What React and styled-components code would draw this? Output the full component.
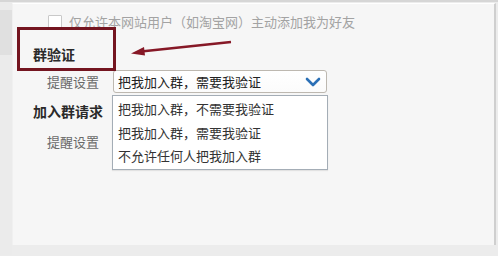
import React from "react";
import styled, { createGlobalStyle } from "styled-components";

const GlobalStyle = createGlobalStyle`
  html, body {
    margin: 0;
    padding: 0;
    background: #ececec;
  }
  body {
    font-family: "Noto Sans CJK SC", "Noto Sans", sans-serif;
  }
`;

const Screen = styled.div`
  position: relative;
  width: 498px;
  height: 256px;
  overflow: hidden;
  display: flex;
  background: #ececec;
  border-top: 2px solid #d6d6d6;
  box-sizing: border-box;
`;

const SideStrip = styled.div`
  width: 12px;
  flex-shrink: 0;
  display: flex;
  flex-direction: column;
`;

const SideBlock = styled.div`
  height: ${(p) => p.h}px;
  background: ${(p) => (p.dark ? "#e0e0e0" : "#ebebeb")};
`;

const Panel = styled.div`
  position: relative;
  margin-top: 1px;
  width: 484px;
  height: 242px;
  box-sizing: border-box;
  background: #f6f6f6;
  border-top: 1px solid #ffffff;
  border-left: 1px solid #f0f0f0;
  border-right: 2px solid #cfcfcf;
  padding: 4px 0 0 20px;
`;

const CheckRow = styled.label`
  display: flex;
  align-items: center;
  height: 26px;
  padding-left: 15px;
  gap: 7px;
  font-size: 13px;
  color: #a3a3a3;
`;

const CheckBox = styled.span`
  width: 12px;
  height: 12px;
  margin-top: 1px;
  border: 1px solid #c9c9c9;
  background: #fff;
  border-radius: 1px;
`;

const Heading = styled.div`
  height: 28px;
  margin-top: ${(p) => p.gap}px;
  display: flex;
  align-items: center;
  font-size: 14px;
  font-weight: 700;
  color: #2a2a2a;
`;

const FieldRow = styled.div`
  display: flex;
  align-items: center;
  height: 23px;
  margin-top: ${(p) => p.gap}px;
`;

const Label = styled.span`
  width: 80px;
  box-sizing: border-box;
  padding-left: 14px;
  font-size: 13px;
  color: #6a6a6a;
`;

const SelectWrap = styled.div`
  position: relative;
`;

const SelectBox = styled.div`
  width: 214px;
  height: 23px;
  box-sizing: border-box;
  border: 1px solid #bdb8b0;
  border-radius: 3px;
  background: linear-gradient(#ffffff, #fbfbfb);
  padding: 0 5px 0 4px;
  display: flex;
  align-items: center;
  justify-content: space-between;
  font-size: 13px;
  color: #222;
`;

const Menu = styled.ul`
  position: absolute;
  top: 25px;
  left: -1px;
  width: 216px;
  height: 75px;
  box-sizing: border-box;
  margin: 0;
  padding: 1px 0 0;
  list-style: none;
  background: #fff;
  border: 1px solid #a4adb6;
  box-shadow: 0 1px 1px rgba(0, 0, 0, 0.08);
  z-index: 2;
`;

const MenuItem = styled.li`
  height: 23.5px;
  line-height: 23.5px;
  padding-left: 5px;
  font-size: 13px;
  color: #333;
`;

const Callout = styled.div`
  position: absolute;
  left: 4px;
  top: 23px;
  width: 99px;
  height: 44px;
  box-sizing: border-box;
  border: 3px solid #741520;
  pointer-events: none;
`;

const Arrow = styled.svg`
  position: absolute;
  left: 102px;
  top: 34px;
  pointer-events: none;
`;

const Chevron = () => (
  <svg width="16" height="10" viewBox="0 0 16 10">
    <polyline
      points="2,2 8,8 14,2"
      fill="none"
      stroke="#2b70b6"
      strokeWidth="2.6"
      strokeLinecap="round"
      strokeLinejoin="round"
    />
  </svg>
);

const options = ["把我加入群，不需要我验证", "把我加入群，需要我验证", "不允许任何人把我加入群"];

export default function App() {
  return (
    <>
      <GlobalStyle />
      <Screen>
        <SideStrip>
          <SideBlock h={8} />
          <SideBlock h={45} dark />
          <SideBlock h={200} />
        </SideStrip>
        <Panel>
          <CheckRow>
            <CheckBox />
            仅允许本网站用户（如淘宝网）主动添加我为好友
          </CheckRow>
          <Heading gap={6}>群验证</Heading>
          <FieldRow gap={2}>
            <Label>提醒设置</Label>
            <SelectWrap>
              <SelectBox>
                把我加入群，需要我验证
                <Chevron />
              </SelectBox>
              <Menu>
                {options.map((o) => (
                  <MenuItem key={o}>{o}</MenuItem>
                ))}
              </Menu>
            </SelectWrap>
          </FieldRow>
          <Heading gap={4}>加入群请求</Heading>
          <FieldRow gap={5}>
            <Label>提醒设置</Label>
          </FieldRow>
          <Callout />
          <Arrow width="122" height="20" viewBox="0 0 122 20">
            <line x1="116" y1="4" x2="26" y2="13.5" stroke="#861826" strokeWidth="2.3" />
            <polygon points="16,15.5 29,9 30,17.5" fill="#861826" />
          </Arrow>
        </Panel>
      </Screen>
    </>
  );
}
